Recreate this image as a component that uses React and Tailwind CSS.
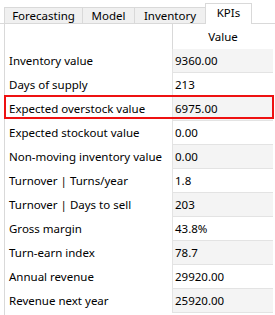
import React from "react";

const rows = [
  ["Inventory value", "9360.00"],
  ["Days of supply", "213"],
  ["Expected overstock value", "6975.00"],
  ["Expected stockout value", "0.00"],
  ["Non-moving inventory value", "0.00"],
  ["Turnover | Turns/year", "1.8"],
  ["Turnover | Days to sell", "203"],
  ["Gross margin", "43.8%"],
  ["Turn-earn index", "78.7"],
  ["Annual revenue", "29920.00"],
  ["Revenue next year", "25920.00"],
];

export default function App() {
  return (
    <div
      className="relative w-[275px] h-[315px] bg-white overflow-hidden text-[11.5px] text-black"
      style={{ fontFamily: '"Noto Sans", "Open Sans", sans-serif' }}
    >
      <div className="flex items-end h-[24px] pl-[4px] border-b border-[#d9d9d9]">
        <div className="w-[79px] h-[16px] border border-b-0 border-[#d9d9d9] bg-[#f0f0f0] flex items-center justify-center leading-none">
          Forecasting
        </div>
        <div className="-ml-px w-[53px] h-[16px] border border-b-0 border-[#d9d9d9] bg-[#f0f0f0] flex items-center justify-center leading-none">
          Model
        </div>
        <div className="-ml-px w-[72px] h-[16px] border border-b-0 border-[#d9d9d9] bg-[#f0f0f0] flex items-center justify-center leading-none">
          Inventory
        </div>
        <div className="-ml-px -mb-px w-[47px] h-[21px] border border-b-0 border-[#d9d9d9] bg-white flex items-center justify-center leading-none pb-[2px]">
          KPIs
        </div>
      </div>
      <div className="ml-[4px] border-l border-[#d9d9d9] h-[291px]">
        <div className="flex h-[25px]">
          <div className="w-[167px]" />
          <div className="w-[101px] border-l border-[#d9d9d9] flex items-center justify-center">
            Value
          </div>
        </div>
        {rows.map(([label, value], i) => (
          <div key={label} className="flex h-[24px]">
            <div className="w-[167px] pl-[4px] flex items-center">{label}</div>
            <div
              className={
                "w-[101px] border-l border-b border-[#e3e3e3] pl-[2px] flex items-center " +
                (i % 2 === 0 ? "bg-[#f4f4f4]" : "bg-white")
              }
            >
              {value}
            </div>
          </div>
        ))}
      </div>
      <div className="absolute left-[4px] top-[95px] w-[270px] h-[24px] border-2 border-[#ee1111]" />
    </div>
  );
}
